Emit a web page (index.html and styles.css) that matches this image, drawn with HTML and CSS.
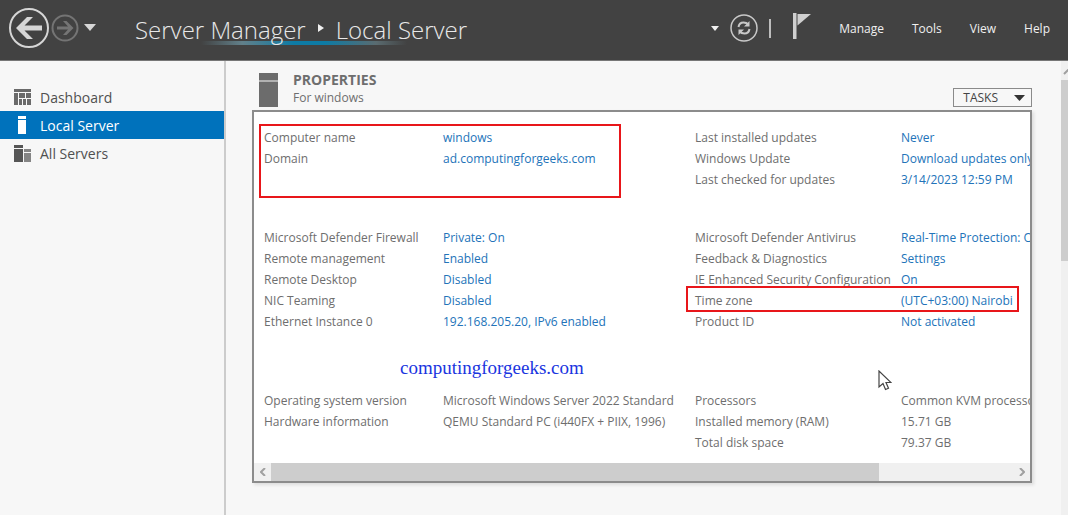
FILE: index.html
```html
<!DOCTYPE html>
<html lang="en">
	<head>
		<meta charset="UTF-8">
		<meta name="viewport" content="width=device-width, initial-scale=1">
		<title>Server Manager</title>
		<link rel="stylesheet" href="styles.css">
	</head>
	<body>
		<header class="topbar">
			<div class="history">
				<button type="button" class="icon-btn" aria-label="Back">
					<svg width="42" height="42" viewBox="0 0 42 42"><circle cx="21" cy="21" r="19" fill="none" stroke="#d6d6d6" stroke-width="2"/><path d="M8 21 19 10h6l-8.500 8.500H34v5H16.500L25 32h-6z" fill="#d6d6d6"/></svg>
				</button>
				<button type="button" class="icon-btn" aria-label="Forward">
					<svg width="28" height="28" viewBox="0 0 28 28"><circle cx="14" cy="14" r="12.500" fill="none" stroke="#747474" stroke-width="2"/><path d="M22.500 14 15.500 7H12l5 5.500H6v3h11L12 21h3.500z" fill="#747474"/></svg>
				</button>
				<button type="button" class="icon-btn history-menu" aria-label="History">
					<svg width="12" height="8" viewBox="0 0 12 8"><path d="M0 0h12L6 7z" fill="#d6d6d6"/></svg>
				</button>
			</div>
			<h1 class="crumbs">
				<span>Server Manager</span>
				<svg width="8" height="12" viewBox="0 0 8 12"><path d="M1 0 7 4 1 8z" fill="#f0f0f0"/></svg>
				<span>Local Server</span>
			</h1>
			<div class="actions">
				<button type="button" class="icon-btn" aria-label="Refresh options">
					<svg width="8" height="5" viewBox="0 0 8 5"><path d="M0 0h8L4 5z" fill="#f0f0f0"/></svg>
				</button>
				<button type="button" class="icon-btn" aria-label="Refresh">
					<svg width="28" height="28" viewBox="0 0 28 28" fill="none" stroke="#c8c8c8"><circle cx="14" cy="14" r="13" stroke-width="1.500"/><path d="M8.500 13c.5-3 2-4.500 5-4.500 2 0 3.500.5 5 2M19.500 15c-.5 3-2 4.500-5 4.500-2 0-3.500-.5-5-2" stroke-width="2"/><path d="M19.500 7v5.500h-5.500zM8.500 21v-5.500H14z" fill="#c8c8c8" stroke="none"/></svg>
				</button>
				<span class="divider"></span>
				<button type="button" class="icon-btn flag" aria-label="Notifications">
					<svg width="18" height="26" viewBox="0 0 18 26"><path d="M0 0h3.500v26H0z" fill="#cfcfcf"/><path d="M4.500 1H18L4.500 12.500z" fill="#cfcfcf"/></svg>
				</button>
				<nav class="menu">
					<a href="#manage">Manage</a>
					<a href="#tools">Tools</a>
					<a href="#view">View</a>
					<a href="#help">Help</a>
				</nav>
			</div>
		</header>

		<div class="page">
			<nav class="sidebar">
				<a href="#dashboard">
					<svg width="18" height="16" viewBox="0 0 18 16" fill="#6a6a6a"><path d="M0 0h17v3H0zM0 4h4v12H0zM5 4h6v5H5zM12 4h5v5h-5zM5 10h3v6H5zM9 10h3v6H9zM13 10h4v6h-4z"/></svg>
					Dashboard
				</a>
				<a href="#local" class="current">
					<svg width="18" height="18" viewBox="0 0 18 18" fill="#fff"><path d="M4 0h8v3H4zM4 4h8v14H4z"/></svg>
					Local Server
				</a>
				<a href="#all">
					<svg width="18" height="17" viewBox="0 0 18 17"><path d="M0 0h9v3H0zM0 4h9v13H0z" fill="#565656"/><path d="M10 4h7v3h-7zM10 8h7v9h-7z" fill="#858585"/></svg>
					All Servers
				</a>
			</nav>

			<main class="content">
				<div class="tile-head">
					<svg width="19" height="34" viewBox="0 0 19 34" fill="#6c6c6c"><path d="M0 0h19v7.500H0zM0 8.500h19V34H0z"/></svg>
					<div class="tile-title">
						<h2>PROPERTIES</h2>
						<p>For windows</p>
					</div>
					<button type="button" class="tasks">TASKS
						<svg width="11" height="6" viewBox="0 0 11 6"><path d="M0 0h11L5.500 6z" fill="#333"/></svg>
					</button>
				</div>

				<section class="panel">
					<div class="groups">
						<div class="group">
							<dl>
								<div><dt>Computer name</dt><dd><a href="#name">windows</a></dd></div>
								<div class="domain"><dt>Domain</dt><dd><a href="#domain">ad.computingforgeeks.com</a></dd></div>
							</dl>
							<dl>
								<div><dt>Last installed updates</dt><dd><a href="#installed">Never</a></dd></div>
								<div><dt>Windows Update</dt><dd><a href="#update">Download updates only</a></dd></div>
								<div><dt>Last checked for updates</dt><dd><a href="#checked">3/14/2023 12:59 PM</a></dd></div>
							</dl>
						</div>
						<div class="group group-config">
							<dl>
								<div><dt>Microsoft Defender Firewall</dt><dd><a href="#firewall">Private: On</a></dd></div>
								<div><dt>Remote management</dt><dd><a href="#remote">Enabled</a></dd></div>
								<div><dt>Remote Desktop</dt><dd><a href="#desktop">Disabled</a></dd></div>
								<div><dt>NIC Teaming</dt><dd><a href="#nic">Disabled</a></dd></div>
								<div><dt>Ethernet Instance 0</dt><dd><a href="#ethernet">192.168.205.20, IPv6 enabled</a></dd></div>
							</dl>
							<dl>
								<div><dt>Microsoft Defender Antivirus</dt><dd><a href="#antivirus">Real-Time Protection: On</a></dd></div>
								<div><dt>Feedback &amp; Diagnostics</dt><dd><a href="#feedback">Settings</a></dd></div>
								<div><dt>IE Enhanced Security Configuration</dt><dd><a href="#ie">On</a></dd></div>
								<div class="zone"><dt>Time zone</dt><dd><a href="#zone">(UTC+03:00) Nairobi</a></dd></div>
								<div><dt>Product ID</dt><dd><a href="#product">Not activated</a></dd></div>
							</dl>
							<p class="watermark">computingforgeeks.com</p>
						</div>
						<div class="group">
							<dl>
								<div><dt>Operating system version</dt><dd>Microsoft Windows Server 2022 Standard</dd></div>
								<div><dt>Hardware information</dt><dd>QEMU Standard PC (i440FX + PIIX, 1996)</dd></div>
							</dl>
							<dl>
								<div><dt>Processors</dt><dd>Common KVM processor</dd></div>
								<div><dt>Installed memory (RAM)</dt><dd>15.71 GB</dd></div>
								<div><dt>Total disk space</dt><dd>79.37 GB</dd></div>
							</dl>
							<svg class="cursor" width="14" height="21" viewBox="0 0 14 21"><path d="M1 1v16l4-3.500 2.500 6 3-1.300-2.500-5.700H13z" fill="#fff" stroke="#444" stroke-width="1.200"/></svg>
						</div>
					</div>
					<div class="hscroll">
						<button type="button" aria-label="Scroll left"><svg width="6" height="8" viewBox="0 0 6 8"><path d="M5 0 1 4l4 4" fill="none" stroke="#a0a0a0" stroke-width="2"/></svg></button>
						<div class="track"><div class="thumb"></div></div>
						<button type="button" aria-label="Scroll right"><svg width="6" height="8" viewBox="0 0 6 8"><path d="M1 0l4 4-4 4" fill="none" stroke="#a0a0a0" stroke-width="2"/></svg></button>
					</div>
				</section>
			</main>

			<div class="vscroll">
				<svg width="7" height="6" viewBox="0 0 7 6"><path d="M3 5 7 1l4 4" fill="none" stroke="#a0a0a0" stroke-width="2"/></svg>
				<div class="thumb"></div>
			</div>
		</div>
	</body>
</html>
```

FILE: styles.css
```css
*, *::before, *::after{
	margin: 0;
	padding: 0;
	box-sizing: border-box;
}
body{
	display: flex;
	flex-direction: column;
	min-height: 100vh;
	background-color: #f7f7f7;
	color: #6e6e6e;
	font-family: "Open Sans", "Segoe UI", sans-serif;
	font-size: 12px;
	line-height: 21px;
}
a{
	color: #2273b9;
	text-decoration: none;
}
button{
	font: inherit;
	color: inherit;
	background: none;
	border: none;
	cursor: pointer;
}
svg{
	display: block;
	flex: none;
}

/* top bar */
.topbar{
	display: flex;
	align-items: center;
	height: 61px;
	padding: 0 18px 4px 8px;
	background-color: #424242;
	border-bottom: 1px solid #777;
	color: #e8e8e8;
}
.history{
	display: flex;
	align-items: center;
	gap: 1px;
}
.history-menu{
	margin-left: 4px;
}
.crumbs{
	display: flex;
	align-items: center;
	gap: 11px;
	margin-left: 39px;
	padding-top: 3px;
	position: relative;
	font-size: 24px;
	font-weight: 300;
	line-height: 30px;
	white-space: nowrap;
}
/* glow under the title */
.crumbs::after{
	content: "";
	position: absolute;
	left: 20%;
	right: 18%;
	bottom: 0;
	height: 4px;
	background: linear-gradient(to right, transparent, #62808a 20%, #0d7ba5 45%, #0d7ba5 60%, #5a6b70 85%, transparent);
	z-index: 0;
}
.crumbs span, .crumbs svg{
	position: relative;
	z-index: 1;
}
.actions{
	display: flex;
	align-items: center;
	margin-left: auto;
	gap: 11px;
}
.divider{
	width: 2px;
	height: 19px;
	background-color: #bdbdbd;
}
.flag{
	margin: 0 17px 4px 11px;
}
.menu{
	display: flex;
	gap: 28px;
}
.menu a{
	color: #f0f0f0;
	font-weight: 500;
}

.page{
	flex: 1;
	display: flex;
}

/* sidebar */
.sidebar{
	width: 226px;
	padding-top: 22px;
	border-right: 2px solid #ccc;
	font-size: 14px;
}
.sidebar a{
	display: flex;
	align-items: center;
	gap: 8px;
	height: 28px;
	padding-left: 14px;
	color: #505050;
}
.sidebar .current{
	background-color: #0072bc;
	color: #fff;
}

/* properties tile */
.content{
	flex: 1;
	min-width: 0;
	padding: 9px 29px 32px 26px;
}
.tile-head{
	display: flex;
	align-items: flex-end;
	padding: 0 0 3px 7px;
}
.tile-title{
	margin-left: 15px;
	line-height: 18px;
}
.tile-title h2{
	font-size: 14px;
	line-height: 19px;
}
.tasks{
	display: flex;
	align-items: center;
	gap: 16px;
	height: 19px;
	margin-left: auto;
	padding: 0 6px 0 9px;
	border: 1px solid #8a8a8a;
	color: #444;
	line-height: 17px;
}
.panel{
	border: 2px solid #8c8c8c;
	background-color: #fff;
	box-shadow: 2px 2px 3px #ddd;
}
.groups{
	display: flex;
	flex-direction: column;
	gap: 37px;
	padding: 15px 0 10px 10px;
	overflow: hidden;
}
.group{
	display: grid;
	grid-template-columns: 431fr 335fr;
	position: relative;
}
.group-config{
	min-height: 126px;
}
dl{
	min-width: 0;
	white-space: nowrap;
}
dl div{
	display: grid;
	grid-template-columns: 179px 1fr;
}
dl + dl div{
	grid-template-columns: 206px 1fr;
}

/* red outlines over the values */
.domain, .zone{
	position: relative;
}
.domain::after, .zone::after{
	content: "";
	position: absolute;
	border: 2px solid #e8161a;
}
.domain::after{
	top: -24px;
	left: -5px;
	width: 362px;
	height: 74px;
}
.zone::after{
	top: -4px;
	left: -9px;
	width: 333px;
	height: 26px;
}
.watermark{
	position: absolute;
	left: 136px;
	bottom: -25px;
	color: #1a35e0;
	font-family: "Liberation Serif", serif;
	font-size: 19px;
}
.cursor{
	position: absolute;
	left: 614px;
	top: -20px;
}

/* scrollbars */
.hscroll{
	display: flex;
	height: 18px;
	background-color: #f0f0f0;
}
.hscroll button{
	display: flex;
	align-items: center;
	justify-content: center;
	width: 17px;
}
.track{
	flex: 1;
}
.thumb{
	background-color: #cdcdcd;
}
.track .thumb{
	width: 82%;
	height: 100%;
}
.vscroll{
	width: 7px;
	padding-top: 8px;
	background-color: #f0f0f0;
}
.vscroll .thumb{
	height: 181px;
	margin-top: 5px;
}
```
